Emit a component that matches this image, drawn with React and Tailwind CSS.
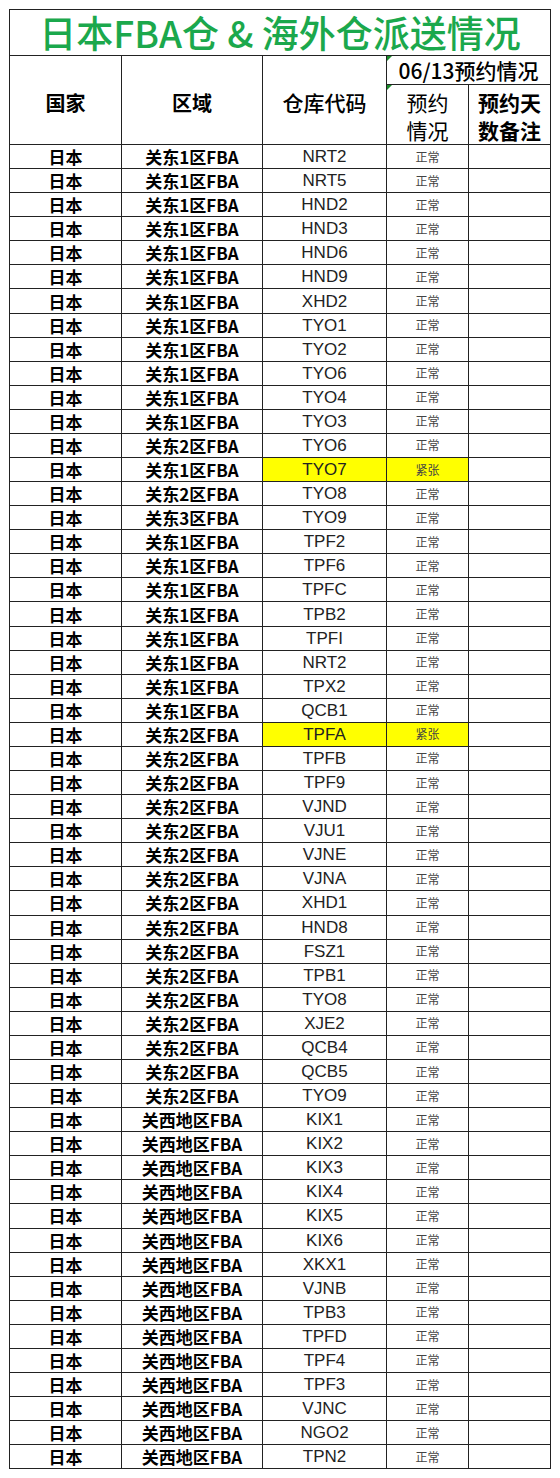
import React from "react";

const A = "关东1区FBA", B = "关东2区FBA", C = "关东3区FBA", K = "关西地区FBA";
const rows = [
  [A, "NRT2"], [A, "NRT5"], [A, "HND2"], [A, "HND3"], [A, "HND6"], [A, "HND9"], [A, "XHD2"],
  [A, "TYO1"], [A, "TYO2"], [A, "TYO6"], [A, "TYO4"], [A, "TYO3"], [B, "TYO6"], [A, "TYO7", true],
  [B, "TYO8"], [C, "TYO9"], [A, "TPF2"], [A, "TPF6"], [A, "TPFC"], [A, "TPB2"], [A, "TPFI"],
  [A, "NRT2"], [A, "TPX2"], [A, "QCB1"], [B, "TPFA", true], [B, "TPFB"], [B, "TPF9"], [B, "VJND"],
  [B, "VJU1"], [B, "VJNE"], [B, "VJNA"], [B, "XHD1"], [B, "HND8"], [B, "FSZ1"], [B, "TPB1"],
  [B, "TYO8"], [B, "XJE2"], [B, "QCB4"], [B, "QCB5"], [B, "TYO9"], [K, "KIX1"], [K, "KIX2"],
  [K, "KIX3"], [K, "KIX4"], [K, "KIX5"], [K, "KIX6"], [K, "XKX1"], [K, "VJNB"], [K, "TPB3"],
  [K, "TPFD"], [K, "TPF4"], [K, "TPF3"], [K, "VJNC"], [K, "NGO2"], [K, "TPN2"],
];

const cjk = { fontFamily: '"Noto Sans CJK SC", "Noto Sans", sans-serif' };
const lat = { fontFamily: '"Liberation Sans", "Noto Sans CJK SC", sans-serif' };

export default function App() {
  return (
    <div className="bg-white w-[560px] h-[1478px] pt-[9px] pl-[9px]">
      <div className="w-[542px] border-l border-t border-[#222]">
        <div
          className="h-[46px] border-r border-b border-[#222] flex items-center justify-center text-[37px] leading-none text-[#1ba84c] font-medium"
          style={cjk}
        >
          <span>日本FBA仓 &amp; 海外仓派送情况</span>
        </div>
        <div className="grid grid-cols-[112px_141px_124px_82px_82px] grid-rows-[29px_60px] text-black" style={cjk}>
          <div className="row-span-2 border-r border-b border-[#222] flex items-center justify-center text-[20px] font-bold pt-[6px]">国家</div>
          <div className="row-span-2 border-r border-b border-[#222] flex items-center justify-center text-[20px] font-bold pt-[6px]">区域</div>
          <div className="row-span-2 border-r border-b border-[#222] flex items-center justify-center text-[21px] font-medium pt-[6px]">仓库代码</div>
          <div className="relative col-span-2 border-r border-b border-[#222] flex items-center justify-center text-[21px] font-medium leading-none">
            <span className="absolute left-0 top-0 w-0 h-0 border-t-[5px] border-r-[5px] border-t-[#1a8a2a] border-r-transparent"></span>
            06/13预约情况
          </div>
          <div className="relative border-r border-b border-[#222] flex flex-col items-center justify-center text-[21px] font-normal leading-[28px] pt-[2px]">
            <span className="absolute left-0 top-0 w-0 h-0 border-t-[5px] border-r-[5px] border-t-[#1a8a2a] border-r-transparent"></span>
            <span>预约</span>
            <span>情况</span>
          </div>
          <div className="border-r border-b border-[#222] flex flex-col items-center justify-center text-[21px] font-bold leading-[28px] pt-[2px]">
            <span>预约天</span>
            <span>数备注</span>
          </div>
        </div>
        {rows.map(([region, code, tight], i) => (
          <div key={i} className="grid grid-cols-[112px_141px_124px_82px_82px] h-[24.09px]">
            <div className="border-r border-b border-[#222] flex items-center justify-center text-[17px] font-bold leading-none text-black" style={cjk}>日本</div>
            <div className="border-r border-b border-[#222] flex items-center justify-center text-[17px] font-bold leading-none text-black" style={cjk}>{region}</div>
            <div className={`border-r border-b border-[#222] flex items-center justify-center text-[17px] leading-none text-[#222] ${tight ? "bg-[#ffff00]" : ""}`} style={lat}>{code}</div>
            <div className={`border-r border-b border-[#222] flex items-center justify-center text-[12px] leading-none text-[#444] ${tight ? "bg-[#ffff00]" : ""}`} style={cjk}>{tight ? "紧张" : "正常"}</div>
            <div className="border-r border-b border-[#222]"></div>
          </div>
        ))}
      </div>
    </div>
  );
}
